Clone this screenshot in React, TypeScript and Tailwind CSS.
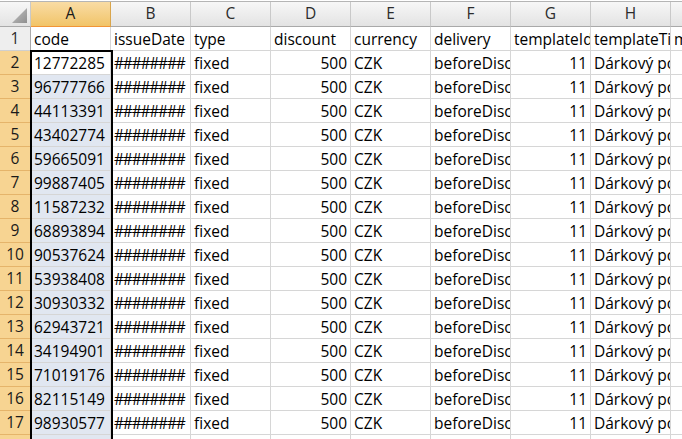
import React from "react";

const codes = [
  "12772285", "96777766", "44113391", "43402774", "59665091", "99887405",
  "11587232", "68893894", "90537624", "53938408", "30930332", "62943721",
  "34194901", "71019176", "82115149", "98930577",
];

const letters = ["A", "B", "C", "D", "E", "F", "G", "H", "I"];
const headings = ["code", "issueDate", "type", "discount", "currency", "delivery", "templateId", "templateTitle", "message"];

const font = { fontFamily: '"Open Sans", "Liberation Sans", sans-serif' };

function Cell({ children, right, sel, active, tight }: { children?: React.ReactNode; right?: boolean; sel?: boolean; active?: boolean; tight?: boolean }) {
  const bg = sel && !active ? "bg-[#e1e7f1]" : "bg-white";
  return (
    <div
      className={`h-[24px] border-r border-b border-[#d6d6d6] ${bg} overflow-hidden whitespace-nowrap px-[3px] flex items-end pb-[1px] text-[15.5px] leading-[20px] text-black ${right ? "justify-end" : "justify-start"} ${tight ? "tracking-[-1.2px]" : ""}`}
    >
      {children}
    </div>
  );
}

function ColHead({ label, selected }: { label: string; selected?: boolean }) {
  return (
    <div
      className={`h-[25px] border-r border-b flex items-center justify-center text-[15.5px] overflow-hidden ${
        selected
          ? "bg-gradient-to-b from-[#f9dca4] to-[#f1c467] border-r-[#d9a54c] border-b-[#f29436] text-[#1a1a1a]"
          : "bg-gradient-to-b from-[#f7f7f7] to-[#e3e3e3] border-r-[#c9c9c9] border-b-[#a9a9a9] text-[#2b2b2b]"
      }`}
    >
      {label}
    </div>
  );
}

function RowHead({ n, selected }: { n: number; selected?: boolean }) {
  return (
    <div
      className={`h-[24px] border-r border-b flex items-center justify-center text-[15.5px] ${
        selected
          ? "bg-[#f7d492] border-r-[#f29436] border-b-[#e5b46a] text-[#1a1a1a]"
          : "bg-[#eeeeee] border-r-[#a9a9a9] border-b-[#cfcfcf] text-[#2b2b2b]"
      }`}
    >
      {n}
    </div>
  );
}

export default function App() {
  return (
    <div className="w-[682px] h-[439px] overflow-hidden bg-white relative" style={font}>
      <div className="h-[1px] bg-white" />
      <div className="grid grid-cols-[31px_repeat(9,80px)] w-[751px] border-t border-[#b5b5b5]">
        {/* corner */}
        <div className="h-[25px] border-r border-b border-r-[#c9c9c9] border-b-[#a9a9a9] bg-gradient-to-b from-[#f7f7f7] to-[#e3e3e3] flex items-end justify-end p-[3px]">
          <svg width="15" height="15" viewBox="0 0 15 15">
            <defs>
              <linearGradient id="tri" x1="0" y1="0" x2="1" y2="1">
                <stop offset="0" stopColor="#c4c4c4" />
                <stop offset="1" stopColor="#8f8f8f" />
              </linearGradient>
            </defs>
            <polygon points="15,0 15,15 0,15" fill="url(#tri)" />
          </svg>
        </div>
        {letters.map((l, i) => (
          <ColHead key={l} label={l} selected={i === 0} />
        ))}

        {/* row 1: field names */}
        <RowHead n={1} />
        {headings.map((h) => (
          <Cell key={h}>{h}</Cell>
        ))}

        {codes.map((c, i) => (
          <React.Fragment key={c}>
            <RowHead n={i + 2} selected />
            <Cell sel active={i === 0}>{c}</Cell>
            <Cell tight>########</Cell>
            <Cell>fixed</Cell>
            <Cell right>500</Cell>
            <Cell>CZK</Cell>
            <Cell>beforeDiscount</Cell>
            <Cell right>11</Cell>
            <Cell>Dárkový poukaz</Cell>
            <Cell />
          </React.Fragment>
        ))}

        <RowHead n={18} selected />
        <Cell sel />
        <Cell />
        <Cell />
        <Cell />
        <Cell />
        <Cell />
        <Cell />
        <Cell />
        <Cell />
      </div>

      {/* selection outline around A2:A18 */}
      <div className="absolute left-[30px] top-[50px] w-[83px] h-[420px] border-[2px] border-black pointer-events-none" />
    </div>
  );
}
